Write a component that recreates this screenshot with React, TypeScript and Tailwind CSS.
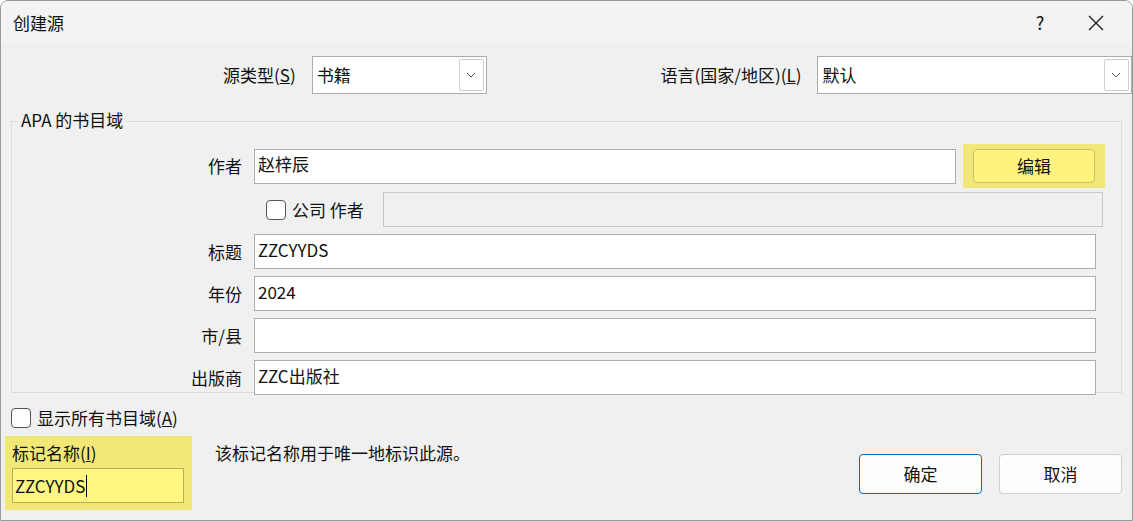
import React from 'react';

const font = { fontFamily: '"Segoe UI", "Noto Sans CJK SC", "Noto Sans", sans-serif' };

const Chevron: React.FC = () => (
  <svg width="10" height="6" viewBox="0 0 10 6" fill="none">
    <path d="M1 1l4 4 4-4" stroke="#555" strokeWidth="1" />
  </svg>
);

const Select: React.FC<{ value: string; className: string }> = ({ value, className }) => (
  <div className={`flex h-[38px] items-center border border-[#adadad] bg-white pl-[4px] ${className}`}>
    <span className="flex-1">{value}</span>
    <div className="mr-[2px] flex h-[32px] w-[25px] items-center justify-center rounded-[2px] border border-[#d0d0d0]">
      <Chevron />
    </div>
  </div>
);

const Field: React.FC<{ label: string; value?: string }> = ({ label, value }) => (
  <div className="flex h-[35px] items-center">
    <div className="w-[242px] pr-[12px] text-right">{label}</div>
    <div className="flex h-[35px] w-[842px] items-center border border-[#adadad] bg-white px-[3px] pb-[4px]">{value}</div>
  </div>
);

const Checkbox: React.FC = () => (
  <div className="h-[20px] w-[20px] rounded-[4px] border border-[#555] bg-white" />
);

const App: React.FC = () => {
  return (
    <div style={font} className="h-[521px] w-[1133px] overflow-hidden rounded-t-[8px] border border-[#9a9a9a] bg-[#f0f0f0] text-[17px] text-[#111]">
      {/* title bar */}
      <div className="flex h-[43px] items-center bg-[#f3f3f3] pl-[12px]">
        <span className="flex-1">创建源</span>
        <span className="w-[40px] text-center text-[18px]">?</span>
        <svg className="mx-[28px]" width="16" height="16" viewBox="0 0 16 16">
          <path d="M1 1l14 14M15 1L1 15" stroke="#222" strokeWidth="1.4" />
        </svg>
      </div>

      {/* source type / language */}
      <div className="mt-[12px] flex h-[38px] items-center">
        <div className="w-[298px] pr-[2px] text-right">源类型(<u>S</u>)</div>
        <Select value="书籍" className="ml-[14px] w-[176px]" />
        <div className="w-[316px] text-right">语言(国家/地区)(<u>L</u>)</div>
        <Select value="默认" className="ml-[16px] w-[316px]" />
      </div>

      {/* group box */}
      <div className="relative ml-[10px] mt-[27px] h-[272px] w-[1111px] border border-[#dcdcdc]">
        <div className="absolute left-[6px] top-[-14px] bg-[#f0f0f0] px-[3px] leading-[24px]">APA 的书目域</div>
        <div className="mt-[22px] flex items-center">
          <div className="w-[242px] pr-[12px] text-right">作者</div>
          <div className="flex h-[35px] w-[702px] items-center border border-[#adadad] bg-white px-[3px] pb-[4px]">赵梓辰</div>
          <div className="ml-[7px] flex h-[44px] w-[142px] items-center justify-center bg-[#f2e878]">
            <div className="flex h-[34px] w-[122px] items-center justify-center rounded-[4px] border border-[#c9c06a] bg-[#fff37e]">编辑</div>
          </div>
        </div>
        <div className="mt-[4px] flex h-[35px] items-center">
          <div className="ml-[254px] flex items-center gap-[6px]">
            <Checkbox />
            <span>公司 作者</span>
          </div>
          <div className="ml-[19px] h-[35px] w-[720px] border border-[#c8c8c8] bg-[#f0f0f0]" />
        </div>
        <div className="mt-[7px] flex flex-col gap-[7px]">
          <Field label="标题" value="ZZCYYDS" />
          <Field label="年份" value="2024" />
          <Field label="市/县" />
          <Field label="出版商" value="ZZC出版社" />
        </div>
      </div>

      {/* show all */}
      <div className="ml-[10px] mt-[12px] flex items-center gap-[6px]">
        <Checkbox />
        <span>显示所有书目域(<u>A</u>)</span>
      </div>

      {/* bottom */}
      <div className="mt-[5px] flex">
        <div className="ml-[4px] flex h-[74px] w-[187px] flex-col bg-[#f2e878] px-[7px] pt-[4px]">
          <span>标记名称(<u>I</u>)</span>
          <div className="mt-[3px] flex h-[35px] w-[172px] items-center border border-[#b5ae5e] bg-[#fff781] px-[2px]">
            ZZCYYDS<span className="ml-[1px] h-[22px] w-[1px] bg-black" />
          </div>
        </div>
        <div className="ml-[23px] mt-[4px] w-[644px]">该标记名称用于唯一地标识此源。</div>
        <div className="mt-[18px] flex gap-[17px]">
          <button className="h-[40px] w-[123px] rounded-[4px] border border-[#0067c0] bg-[#fdfdfd]">确定</button>
          <button className="h-[40px] w-[123px] rounded-[4px] border border-[#cfcfcf] bg-[#fdfdfd]">取消</button>
        </div>
      </div>
    </div>
  );
};

export default App;
